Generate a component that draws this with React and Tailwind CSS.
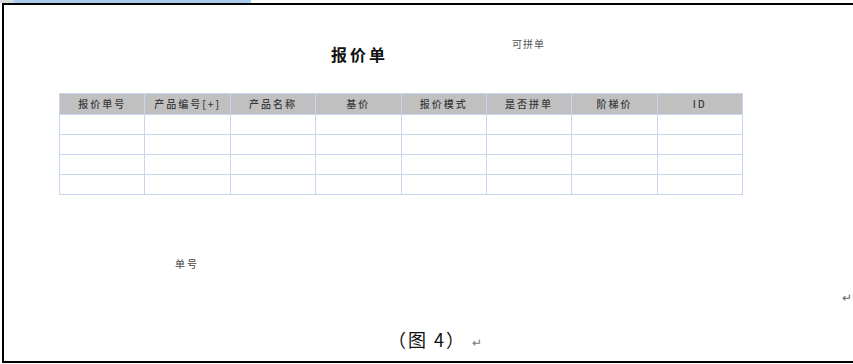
const COLUMNS = ['报价单号', '产品编号[+]', '产品名称', '基价', '报价模式', '是否拼单', '阶梯价', 'ID']
const ROWS = 4

const cjk = { fontFamily: '"Noto Sans CJK SC", "Liberation Serif", serif' }

export default function App() {
  return (
    <div className="w-[853px] h-[364px] bg-white relative overflow-hidden" style={cjk}>
      {/* top strip: grey edge + blue selection band */}
      <div className="flex h-[3px]">
        <div className="w-[14px] bg-[#d9d9d9]" />
        <div className="w-[237px] bg-[#a9cbec]" />
      </div>

      {/* framed page */}
      <div className="ml-[2px] h-[360px] border-t-2 border-l-2 border-b-2 border-black relative">
        {/* title row */}
        <div className="flex items-start h-[88px]">
          <div className="w-[327px]" />
          <h1 className="mt-[37px] text-[16px] font-bold tracking-[3px] text-[#111]">报价单</h1>
          <div className="w-[124px]" />
          <span className="mt-[31px] text-[10px] tracking-[1px] text-[#555]">可拼单</span>
        </div>

        {/* table */}
        <div className="ml-[55px] w-[684px]">
          <table className="w-full border-collapse table-fixed">
            <thead>
              <tr className="h-[21px] bg-[#c0c0c0]">
                {COLUMNS.map((c, i) => (
                  <th
                    key={i}
                    className="border border-[#c5d6ee] font-medium text-[10px] tracking-[2px] text-[#3a3a3a] leading-none p-0"
                  >
                    {c}
                  </th>
                ))}
              </tr>
            </thead>
            <tbody>
              {Array.from({ length: ROWS }).map((_, r) => (
                <tr key={r} className="h-[20px]">
                  {COLUMNS.map((_, i) => (
                    <td key={i} className="border border-[#c5d6ee] p-0" />
                  ))}
                </tr>
              ))}
            </tbody>
          </table>
        </div>

        <div className="ml-[171px] mt-[61px] text-[10px] tracking-[2px] text-[#444]">单号</div>

        {/* return marks + caption */}
        <span className="absolute right-[1px] top-[286px] text-[12px] text-[#666] leading-none">↵</span>
        <div className="absolute left-[384px] top-[325px] flex items-end">
          <span className="text-[18px] text-[#111] tracking-[2px] leading-none">（图 4）</span>
          <span className="ml-[6px] text-[12px] text-[#777] leading-none">↵</span>
        </div>
      </div>
    </div>
  )
}
